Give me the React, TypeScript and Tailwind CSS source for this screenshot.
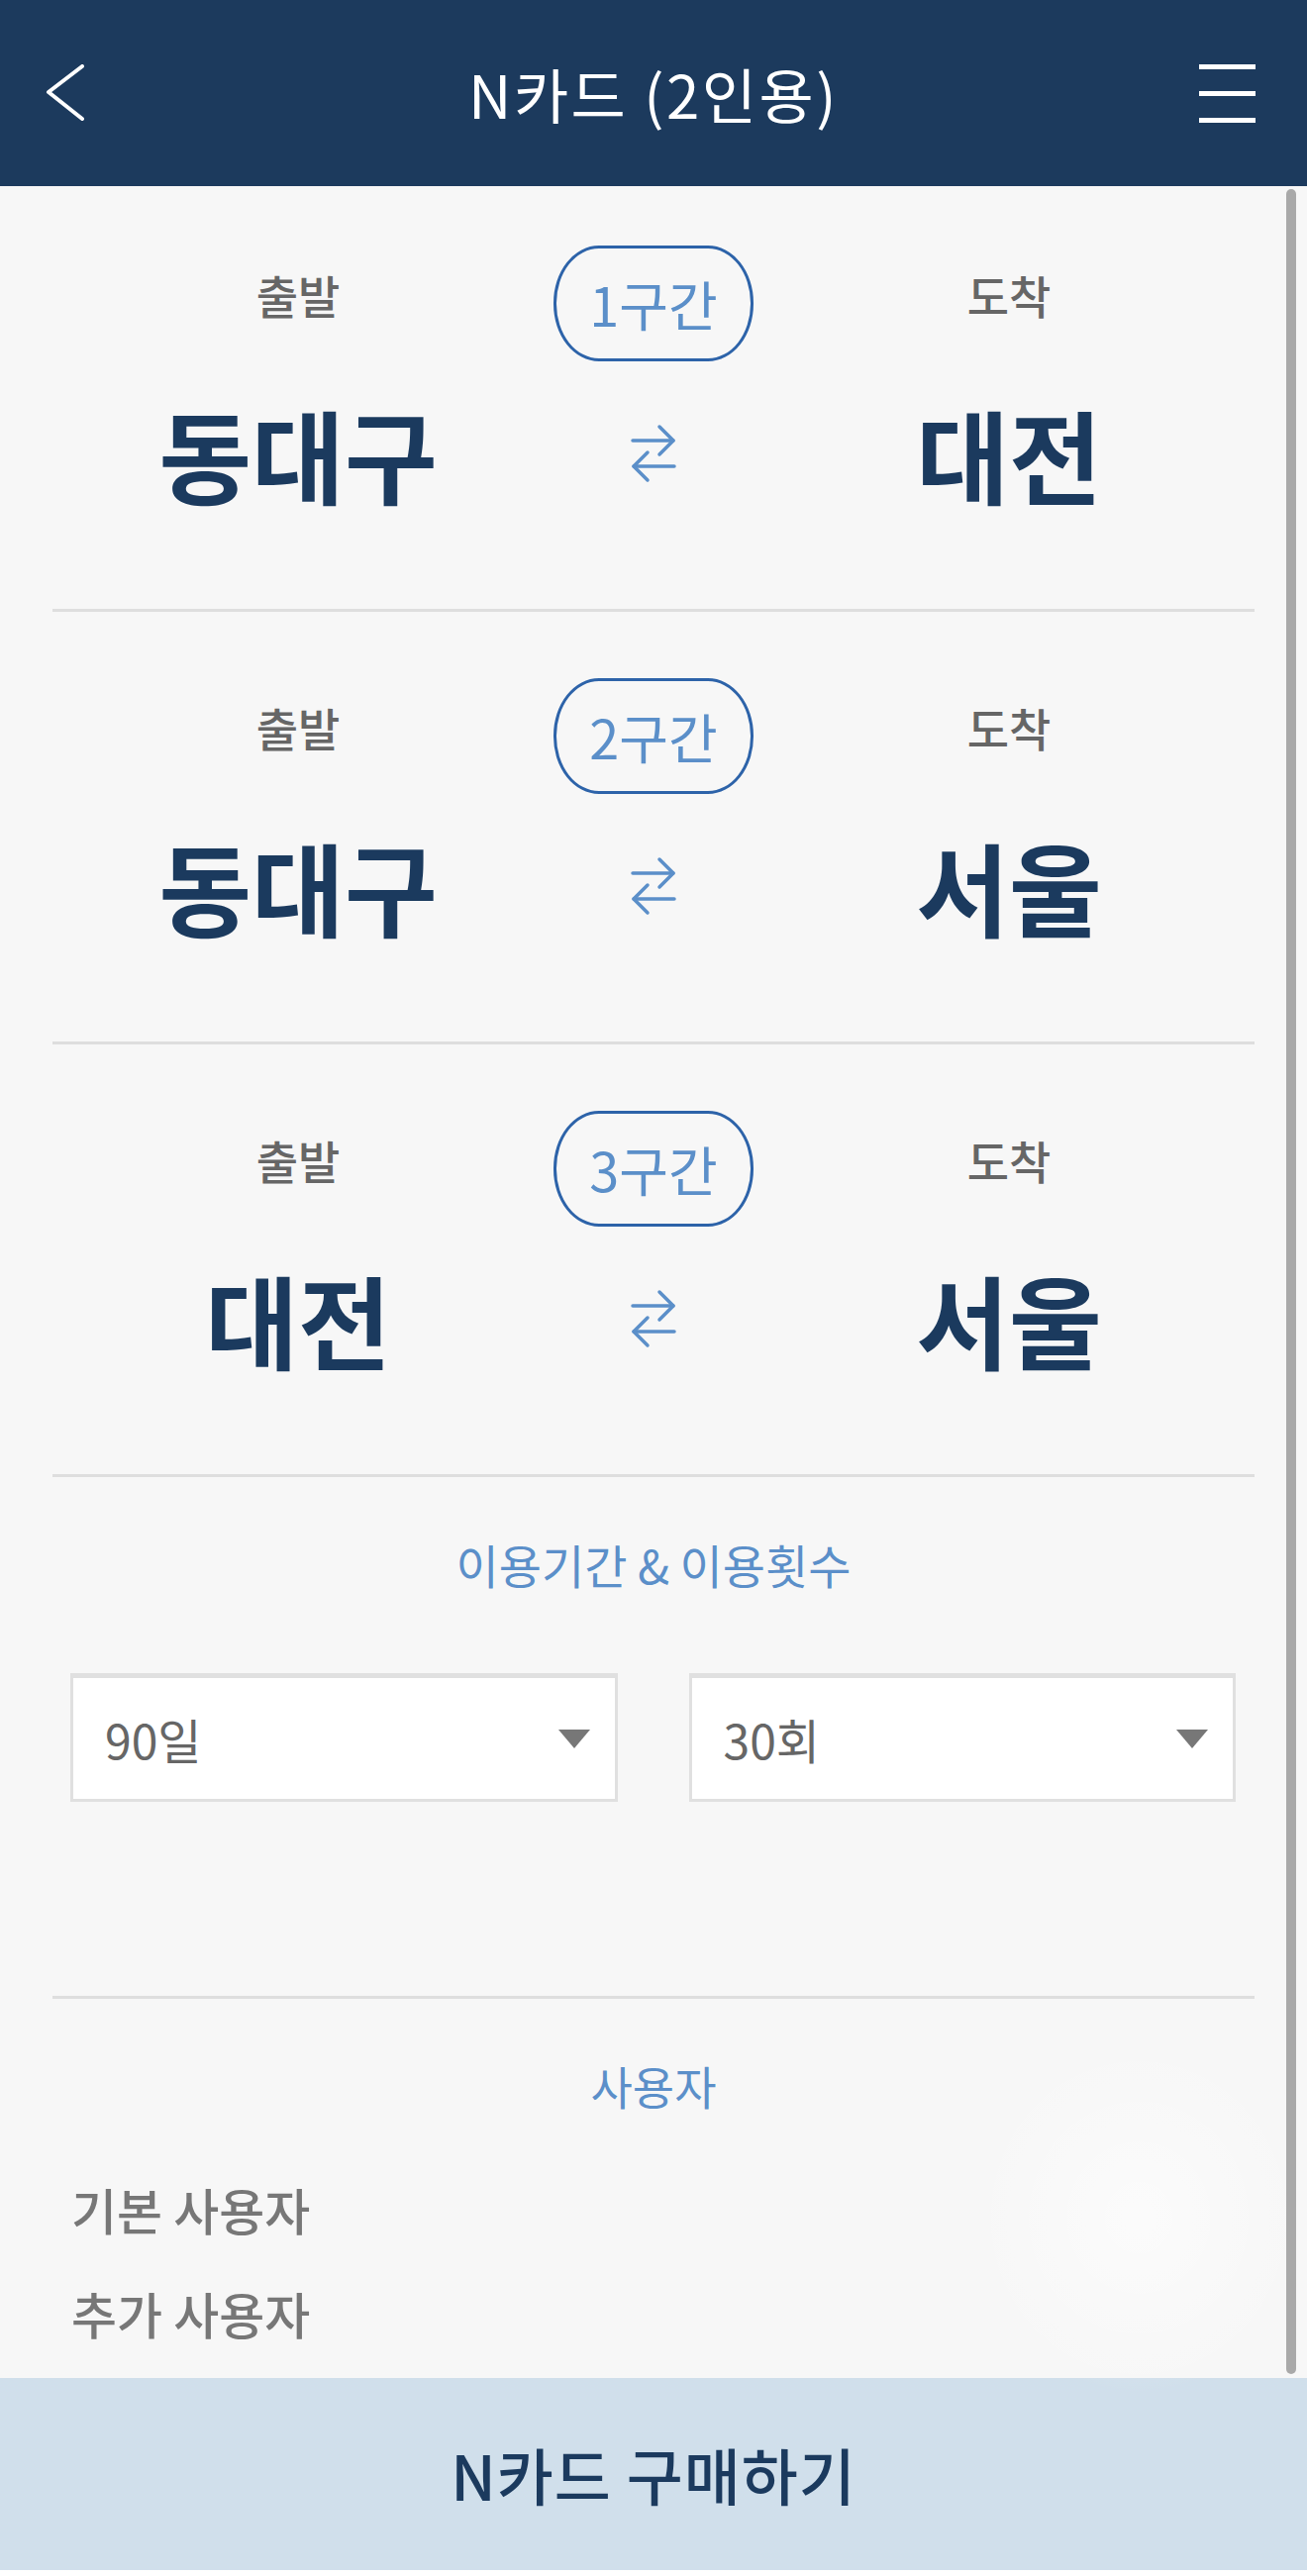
const font = "font-['Noto_Sans_CJK_KR','Noto_Sans',sans-serif]";

function BackIcon() {
  return (
    <svg width="40" height="58" viewBox="0 0 40 58" fill="none">
      <path d="M37 2 L3 28 L37 55" stroke="white" strokeWidth="4" strokeLinecap="round" strokeLinejoin="round" />
    </svg>
  );
}

function SwapIcon() {
  return (
    <svg width="48" height="60" viewBox="0 0 48 60" fill="none" className="text-[#5b8fc9]">
      <g stroke="currentColor" strokeWidth="3.5" strokeLinecap="round" strokeLinejoin="round">
        <path d="M3 17 H44" />
        <path d="M30 3 L44 17 L30 31" />
        <path d="M4 43 H45" />
        <path d="M18 29 L4 43 L18 57" />
      </g>
    </svg>
  );
}

function Caret() {
  return (
    <svg width="32" height="19" viewBox="0 0 32 19">
      <polygon points="0,0 32,0 16,19" fill="#777" />
    </svg>
  );
}

function Route({ no, from, to, first }: { no: number; from: string; to: string; first?: boolean }) {
  return (
    <section className={`border-b-[3px] border-[#dedede] pb-[106px] ${first ? "pt-[60px]" : "pt-[67px]"}`}>
      <div className="grid grid-cols-[496px_222px_496px] items-center">
        <span className="mb-[19px] text-center text-[46px] font-medium leading-none text-[#666]">출발</span>
        <div className="flex justify-center">
          <div className="flex h-[117px] w-[202px] items-center justify-center rounded-[46px/58px] border-[3px] border-[#2d63a9] text-[54px] leading-none text-[#5b8fc9]">
            {no}구간
          </div>
        </div>
        <span className="mb-[19px] text-center text-[46px] font-medium leading-none text-[#666]">도착</span>
      </div>
      <div className="mt-[42px] grid grid-cols-[496px_222px_496px] items-center">
        <span className="text-center text-[102px] font-bold leading-none text-[#1b3a5e]">{from}</span>
        <div className="flex justify-center">
          <SwapIcon />
        </div>
        <span className="text-center text-[102px] font-bold leading-none text-[#1b3a5e]">{to}</span>
      </div>
    </section>
  );
}

function Select({ value }: { value: string }) {
  return (
    <div className="flex h-[130px] items-center justify-between border-[3px] border-t-[5px] border-[#e0e0e0] bg-white pl-[32px] pr-[25px]">
      <span className="text-[48px] leading-none text-[#666]">{value}</span>
      <Caret />
    </div>
  );
}

export default function App() {
  return (
    <div className={`relative w-[1320px] bg-[#f7f7f7] ${font}`}>
      <header className="grid h-[188px] grid-cols-[1fr_auto_1fr] items-center bg-[#1c3a5d]">
        <div className="pl-[46px]">
          <BackIcon />
        </div>
        <h1 className="text-[60px] font-normal leading-none tracking-[2.5px] text-white">N카드 (2인용)</h1>
        <div className="flex justify-end pr-[52px]">
          <div className="flex flex-col gap-[22px]">
            <div className="h-[5px] w-[57px] bg-white" />
            <div className="h-[5px] w-[57px] bg-white" />
            <div className="h-[5px] w-[57px] bg-white" />
          </div>
        </div>
      </header>

      <main className="mx-[53px] w-[1214px]">
        <Route no={1} from="동대구" to="대전" first />
        <Route no={2} from="동대구" to="서울" />
        <Route no={3} from="대전" to="서울" />

        <section className="border-b-[3px] border-[#dedede] pt-[64px] pb-[196px]">
          <p className="text-center text-[47px] leading-none text-[#5b8fc9]">이용기간 &amp; 이용횟수</p>
          <div className="mt-[87px] grid grid-cols-2 gap-[72px] pl-[18px] pr-[19px]">
            <Select value="90일" />
            <Select value="30회" />
          </div>
        </section>

        <section className="pt-[64px] pb-[41px]">
          <p className="text-center text-[46px] leading-none text-[#5b8fc9]">사용자</p>
          <p className="mt-[77px] pl-[19px] text-[50px] font-medium leading-none text-[#777]">기본 사용자</p>
          <p className="mt-[55px] pl-[19px] text-[50px] font-medium leading-none text-[#777]">추가 사용자</p>
        </section>
      </main>

      <button className="flex h-[194px] w-full items-center justify-center bg-[#d0dfeb] text-[62px] font-medium leading-none tracking-[1px] text-[#1b3a5e]">
        N카드 구매하기
      </button>
      <div className="h-[6px] bg-white" />

      <div className="pointer-events-none absolute top-[2060px] right-0 h-[360px] w-[340px] bg-[radial-gradient(ellipse_at_center,rgba(255,255,255,0.55),rgba(255,255,255,0)_70%)]" />
      <div className="pointer-events-none absolute top-[191px] right-[11px] h-[2207px] w-[10px] rounded-full bg-[#a9a9a9]" />
    </div>
  );
}
